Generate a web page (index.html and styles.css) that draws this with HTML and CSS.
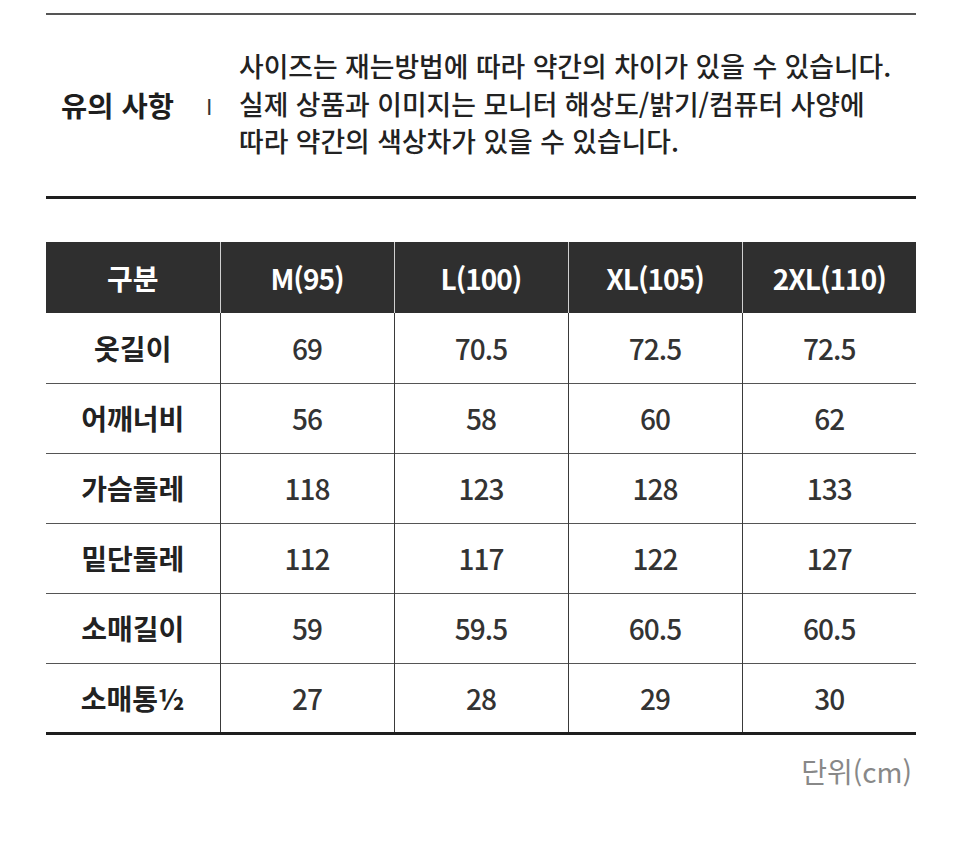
FILE: index.html
```html
<!DOCTYPE html>
<html lang="ko">
<head>
<meta charset="utf-8">
<link rel="stylesheet" href="styles.css">
</head>
<body>
<div class="page">
  <section class="notice">
    <div class="notice-title">유의 사항</div>
    <div class="notice-sep">I</div>
    <div class="notice-text">
      <p>사이즈는 재는방법에 따라 약간의 차이가 있을 수 있습니다.</p>
      <p>실제 상품과 이미지는 모니터 해상도/밝기/컴퓨터 사양에</p>
      <p>따라 약간의 색상차가 있을 수 있습니다.</p>
    </div>
  </section>
  <table class="size-table">
    <thead>
      <tr><th class="label">구분</th><th>M(95)</th><th>L(100)</th><th>XL(105)</th><th>2XL(110)</th></tr>
    </thead>
    <tbody>
      <tr><td class="label">옷길이</td><td>69</td><td>70.5</td><td>72.5</td><td>72.5</td></tr>
      <tr><td class="label">어깨너비</td><td>56</td><td>58</td><td>60</td><td>62</td></tr>
      <tr><td class="label">가슴둘레</td><td>118</td><td>123</td><td>128</td><td>133</td></tr>
      <tr><td class="label">밑단둘레</td><td>112</td><td>117</td><td>122</td><td>127</td></tr>
      <tr><td class="label">소매길이</td><td>59</td><td>59.5</td><td>60.5</td><td>60.5</td></tr>
      <tr><td class="label">소매통½</td><td>27</td><td>28</td><td>29</td><td>30</td></tr>
    </tbody>
  </table>
  <div class="unit">단위(cm)</div>
</div>
</body>
</html>
```
FILE: styles.css
```css
html, body {
  margin: 0;
  padding: 0;
  background: #ffffff;
}
body {
  font-family: "Noto Sans CJK KR", "Noto Sans", sans-serif;
  color: #222222;
}
.page {
  width: 870px;
  margin: 0 0 0 46px;
  padding-top: 13px;
}
.notice {
  display: flex;
  align-items: center;
  border-top: 2px solid #555555;
  border-bottom: 3px solid #1e1e1e;
  height: 186px;
  box-sizing: border-box;
}
.notice-title {
  font-size: 28.5px;
  font-weight: 700;
  margin-left: 15px;
  width: 145px;
  color: #1e1e1e;
  padding-bottom: 2px;
}
.notice-sep {
  font-size: 22px;
  font-weight: 400;
  width: 33px;
  color: #333;
  padding-bottom: 2px;
}
.notice-text {
  font-size: 26.8px;
  font-weight: 500;
  line-height: 37.5px;
  color: #222;
  padding-bottom: 4px;
}
.notice-text p {
  margin: 0;
}
.size-table {
  margin-top: 43px;
  width: 870px;
  border-collapse: collapse;
  table-layout: fixed;
  border-bottom: 3px solid #1e1e1e;
}
.size-table th,
.size-table td {
  height: 70px;
  padding: 0;
  text-align: center;
  vertical-align: middle;
  font-size: 28px;
  letter-spacing: -1px;
  box-sizing: border-box;
}
.size-table th {
  height: 71px;
  background: #2f2f2f;
  color: #ffffff;
  font-weight: 700;
  border-left: 1.5px solid #d0d0d0;
}
.size-table th:first-child {
  border-left: none;
}
.size-table td {
  color: #333333;
  font-weight: 500;
  border-left: 1.5px solid #3a3a3a;
  border-top: 1.5px solid #555555;
}
.size-table .label {
  letter-spacing: 0;
}
.size-table td.label {
  border-left: none;
  font-weight: 700;
  color: #222222;
}
.size-table tbody tr:first-child td {
  border-top: none;
}
.unit {
  text-align: right;
  font-size: 28px;
  color: #888888;
  margin-top: 16px;
  padding-right: 4px;
}
```
